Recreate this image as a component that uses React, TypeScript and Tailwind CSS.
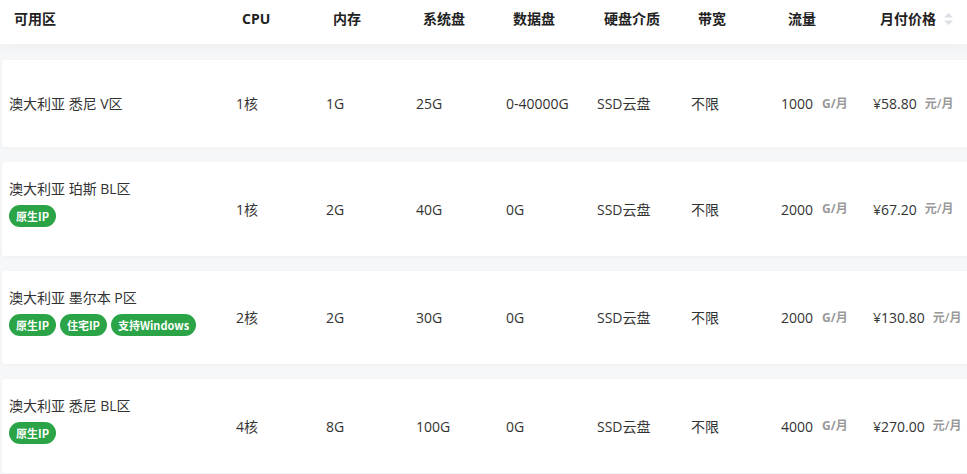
import { ReactNode } from "react";

interface Plan {
  name: string;
  tags: string[];
  cpu: string;
  mem: string;
  sys: string;
  data: string;
  disk: string;
  bw: string;
  traffic: string;
  price: string;
  height: string;
}

const plans: Plan[] = [
  { name: "澳大利亚 悉尼 V区", tags: [], cpu: "1核", mem: "1G", sys: "25G", data: "0-40000G", disk: "SSD云盘", bw: "不限", traffic: "1000", price: "¥58.80", height: "h-[87px]" },
  { name: "澳大利亚 珀斯 BL区", tags: ["原生IP"], cpu: "1核", mem: "2G", sys: "40G", data: "0G", disk: "SSD云盘", bw: "不限", traffic: "2000", price: "¥67.20", height: "h-[94px]" },
  { name: "澳大利亚 墨尔本 P区", tags: ["原生IP", "住宅IP", "支持Windows"], cpu: "2核", mem: "2G", sys: "30G", data: "0G", disk: "SSD云盘", bw: "不限", traffic: "2000", price: "¥130.80", height: "h-[93px]" },
  { name: "澳大利亚 悉尼 BL区", tags: ["原生IP"], cpu: "4核", mem: "8G", sys: "100G", data: "0G", disk: "SSD云盘", bw: "不限", traffic: "4000", price: "¥270.00", height: "h-[94px]" },
];

const cols = "grid grid-cols-[227px_90px_90px_90px_91px_94px_90px_92px_1fr]";

function Cell({ children }: { children: ReactNode }) {
  return <div className="flex items-center pl-[7px] whitespace-nowrap">{children}</div>;
}

function SortIcon() {
  return (
    <svg width="11" height="14" viewBox="0 0 11 14" className="ml-[7px]">
      <path d="M5.5 1 L10 5.5 L1 5.5 Z" fill="#dcdfe6" />
      <path d="M5.5 13 L10 8.5 L1 8.5 Z" fill="#dcdfe6" />
    </svg>
  );
}

export default function App() {
  const heads = ["可用区", "CPU", "内存", "系统盘", "数据盘", "硬盘介质", "带宽", "流量"];
  return (
    <div
      className="w-[967px] h-[474px] overflow-hidden bg-[#f6f7f8] text-[14px] text-[#333]"
      style={{ fontFamily: '"Open Sans", "Noto Sans CJK SC", sans-serif' }}
    >
      <div className="h-[44px] bg-white shadow-[0_4px_12px_rgba(0,0,0,0.035)] grid grid-cols-[228px_91px_90px_90px_91px_94px_90px_92px_1fr] items-start pt-[9px] font-bold text-[#222] leading-[20px]">
        {heads.map((h) => (
          <div key={h} className="pl-[14px] whitespace-nowrap">{h}</div>
        ))}
        <div className="pl-[14px] flex items-center whitespace-nowrap">
          月付价格
          <SortIcon />
        </div>
      </div>

      <div className="mt-[16px] pl-[2px] flex flex-col gap-[15px]">
        {plans.map((p) => (
          <div
            key={p.name}
            className={`${cols} ${p.height} w-[990px] bg-white rounded-[3px] shadow-[0_1px_4px_rgba(0,0,0,0.03)]`}
          >
            <div className={`pl-[7px] flex flex-col ${p.tags.length ? "pt-[18px]" : "justify-center"}`}>
              <div className="leading-[18px] whitespace-nowrap">{p.name}</div>
              {p.tags.length > 0 && (
                <div className="flex gap-[4px] mt-[7px]">
                  {p.tags.map((t) => (
                    <span
                      key={t}
                      className="h-[22px] px-[7px] rounded-full bg-[#2aa447] text-white text-[11px] font-bold flex items-center font-['Noto_Sans_CJK_SC',sans-serif]"
                    >
                      {t}
                    </span>
                  ))}
                </div>
              )}
            </div>
            <Cell>{p.cpu}</Cell>
            <Cell>{p.mem}</Cell>
            <Cell>{p.sys}</Cell>
            <Cell>{p.data}</Cell>
            <Cell>{p.disk}</Cell>
            <Cell>{p.bw}</Cell>
            <Cell>
              {p.traffic}
              <span className="ml-[9px] text-[12px] font-bold text-[#999]">G/月</span>
            </Cell>
            <Cell>
              {p.price}
              <span className="ml-[8px] text-[12px] font-semibold text-[#999]">元/月</span>
            </Cell>
          </div>
        ))}
      </div>
    </div>
  );
}
